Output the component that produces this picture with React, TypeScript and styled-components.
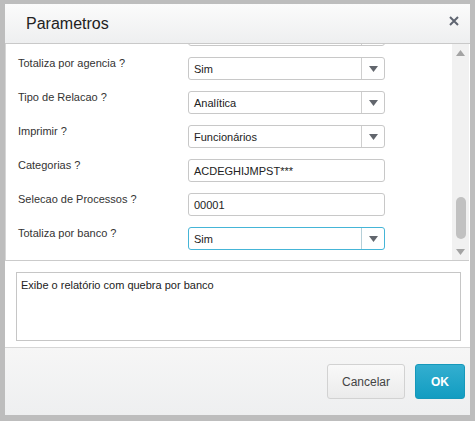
import { createGlobalStyle, css } from 'styled-components'
import styled from 'styled-components'

const GlobalStyle = createGlobalStyle`
  html, body {
    margin: 0;
    padding: 0;
    background: #bdbdbd;
  }
  body {
    font-family: 'Liberation Sans', Arial, sans-serif;
    color: #333;
  }
  #root {
    padding: 4px 5px 6px 5px;
  }
`

type Field = {
  label: string
  value: string
  kind: 'select' | 'input'
  focused?: boolean
}

// first row is scrolled out of view, only its input's bottom edge shows
const fields: Field[] = [
  { label: '', value: '', kind: 'select' },
  { label: 'Totaliza por agencia ?', value: 'Sim', kind: 'select' },
  { label: 'Tipo de Relacao ?', value: 'Analítica', kind: 'select' },
  { label: 'Imprimir ?', value: 'Funcionários', kind: 'select' },
  { label: 'Categorias ?', value: 'ACDEGHIJMPST***', kind: 'input' },
  { label: 'Selecao de Processos ?', value: '00001', kind: 'input' },
  { label: 'Totaliza por banco ?', value: 'Sim', kind: 'select', focused: true },
]

function Arrow({ up, color }: { up?: boolean; color: string }) {
  return (
    <svg width="9" height="6" viewBox="0 0 9 6">
      <polygon
        points={up ? '0,6 9,6 4.5,0' : '0,0 9,0 4.5,6'}
        fill={color}
      />
    </svg>
  )
}

export default function App() {
  return (
    <>
      <GlobalStyle />
      <S.Dialog>
        <S.Header>
          <S.Title>Parametros</S.Title>
          <S.Close>
            <svg width="10" height="10" viewBox="0 0 10 10">
              <path
                d="M1 1 L9 9 M9 1 L1 9"
                stroke="#5f6571"
                strokeWidth="2"
              />
            </svg>
          </S.Close>
        </S.Header>

        <S.ScrollArea>
          <S.ScrollContent>
            <S.Rows $offset={21}>
              {fields.map((f, i) => (
                <S.Row key={i}>
                  <S.Label>{f.label}</S.Label>
                  {f.kind === 'select' ? (
                    <S.Control $focused={f.focused}>
                      <S.Value>{f.value}</S.Value>
                      <S.SelectButton $focused={f.focused}>
                        <Arrow color="#62666d" />
                      </S.SelectButton>
                    </S.Control>
                  ) : (
                    <S.Control>
                      <S.Value>{f.value}</S.Value>
                    </S.Control>
                  )}
                </S.Row>
              ))}
            </S.Rows>
          </S.ScrollContent>
          <S.Scrollbar>
            <S.ScrollArrow>
              <Arrow up color="#a3a3a3" />
            </S.ScrollArrow>
            <S.Track>
              <S.Thumb $top={136} />
            </S.Track>
            <S.ScrollArrow>
              <Arrow color="#a3a3a3" />
            </S.ScrollArrow>
          </S.Scrollbar>
        </S.ScrollArea>

        <S.Body>
          <S.Help>Exibe o relatório com quebra por banco</S.Help>
        </S.Body>

        <S.Footer>
          <S.Button>Cancelar</S.Button>
          <S.Button $primary>OK</S.Button>
        </S.Footer>
      </S.Dialog>
    </>
  )
}

const S = {
  Dialog: styled.div`
    width: 465px;
    height: 411px;
    display: flex;
    flex-direction: column;
    background: #fff;
    overflow: hidden;
  `,
  Header: styled.div`
    height: 40px;
    flex: none;
    display: flex;
    align-items: center;
    justify-content: space-between;
    padding: 0 11px 0 21px;
    box-sizing: border-box;
    background: linear-gradient(#fbfbfb, #eeeff0);
    border-bottom: 1px solid #c9c9c9;
  `,
  Title: styled.h1`
    margin: 0;
    font-size: 16px;
    font-weight: normal;
    color: #222;
  `,
  Close: styled.div`
    display: flex;
    align-self: flex-start;
    margin-top: 12px;
  `,
  ScrollArea: styled.div`
    height: 217px;
    flex: none;
    display: flex;
    box-sizing: border-box;
    border-left: 1px solid #d6d6d6;
    border-bottom: 1px solid #cbcbcb;
    margin-right: 1px;
  `,
  ScrollContent: styled.div`
    flex: 1;
    overflow: hidden;
    padding-left: 12px;
  `,
  Rows: styled.div<{ $offset: number }>`
    display: flex;
    flex-direction: column;
    gap: 11px;
    margin-top: ${(p) => -p.$offset}px;
  `,
  Row: styled.div`
    display: flex;
    align-items: flex-start;
    height: 23px;
  `,
  Label: styled.div`
    width: 170px;
    flex: none;
    font-size: 11px;
    line-height: 13px;
    color: #333;
  `,
  Control: styled.div<{ $focused?: boolean }>`
    width: 197px;
    height: 23px;
    box-sizing: border-box;
    display: flex;
    align-items: center;
    border: 1px solid ${(p) => (p.$focused ? '#45b5d7' : '#c8c8c8')};
    border-radius: 3px;
    background: #fff;
  `,
  Value: styled.div`
    flex: 1;
    padding-left: 5px;
    font-size: 11px;
    color: #222;
    white-space: nowrap;
  `,
  SelectButton: styled.div<{ $focused?: boolean }>`
    width: 22px;
    height: 100%;
    display: flex;
    align-items: center;
    justify-content: center;
    border-left: 1px solid ${(p) => (p.$focused ? '#b5cfd8' : '#cfcfcf')};
  `,
  Scrollbar: styled.div`
    width: 17px;
    flex: none;
    display: flex;
    flex-direction: column;
    background: #f1f1f1;
  `,
  ScrollArrow: styled.div`
    height: 17px;
    flex: none;
    display: flex;
    align-items: center;
    justify-content: center;
  `,
  Track: styled.div`
    flex: 1;
    display: flex;
    flex-direction: column;
    align-items: center;
  `,
  Thumb: styled.div<{ $top: number }>`
    width: 10px;
    height: 42px;
    margin-top: ${(p) => p.$top}px;
    border-radius: 5px;
    background: #c1c1c1;
  `,
  Body: styled.div`
    flex: 1;
    padding: 11px 9px 6px 11px;
    border-bottom: 1px solid #d6d6d6;
  `,
  Help: styled.div`
    height: 69px;
    box-sizing: border-box;
    border: 1px solid #c6c6c6;
    padding: 6px 4px;
    font-size: 11px;
    color: #222;
  `,
  Footer: styled.div`
    height: 67px;
    flex: none;
    box-sizing: border-box;
    display: flex;
    justify-content: flex-end;
    align-items: flex-start;
    gap: 10px;
    padding: 16px 5px 0 0;
    background: linear-gradient(#f6f6f6, #eeeff0);
  `,
  Button: styled.button<{ $primary?: boolean }>`
    height: 35px;
    box-sizing: border-box;
    font-family: 'Liberation Sans', Arial, sans-serif;
    font-size: 12px;
    border-radius: 3px;
    cursor: pointer;
    ${(p) =>
      p.$primary
        ? css`
            width: 50px;
            border: 1px solid #1598ba;
            background: linear-gradient(#33aed0, #129dc1);
            color: #fff;
            font-weight: bold;
          `
        : css`
            width: 78px;
            border: 1px solid #d2d2d2;
            background: linear-gradient(#f9f9f9, #ebebeb);
            color: #444;
          `}
  `,
}
